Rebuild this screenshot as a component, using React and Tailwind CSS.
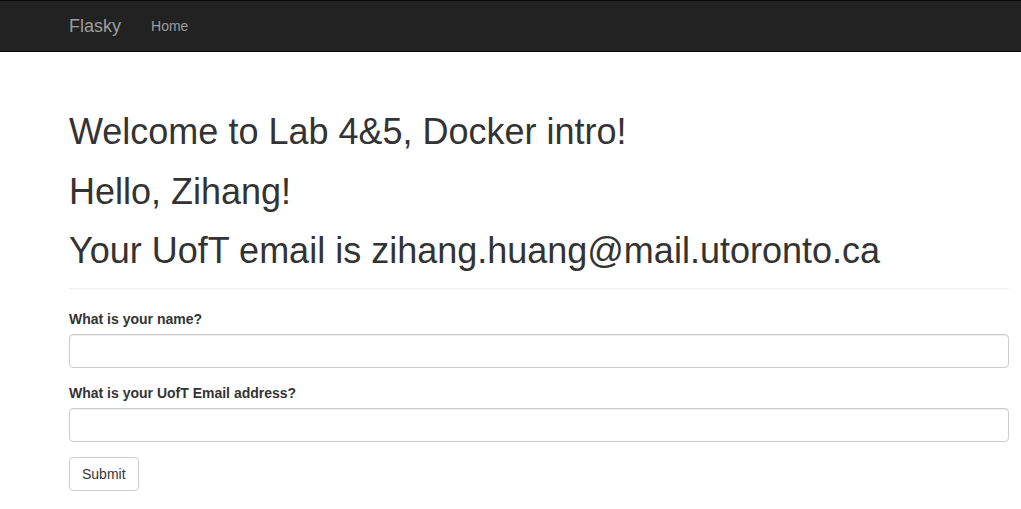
export default function App() {
  return (
    <div className="min-h-screen bg-white text-[14px] leading-[20px] text-[#333] font-['Liberation_Sans',Arial,sans-serif]">
      <nav className="h-[52px] border-y border-[#080808] bg-[#222]">
        <div className="ml-[54px] flex h-full w-[970px] items-center px-[15px]">
          <a className="text-[18px] leading-[20px] text-[#9d9d9d]" href="#">
            Flasky
          </a>
          <a className="ml-[30px] text-[14px] text-[#9d9d9d]" href="#">
            Home
          </a>
        </div>
      </nav>

      <div className="ml-[54px] w-[970px] px-[15px] pt-[20px]">
        <div className="mt-[40px] mb-[20px] border-b border-[#eee] pb-[7px]">
          <h1 className="text-[36px] leading-[1.1]">Welcome to Lab 4&amp;5, Docker intro!</h1>
          <h1 className="mt-[20px] text-[36px] leading-[1.1]">Hello, Zihang!</h1>
          <h1 className="mt-[20px] mb-[10px] text-[36px] leading-[1.1]">
            Your UofT email is zihang.huang@mail.utoronto.ca
          </h1>
        </div>

        <form onSubmit={(e) => e.preventDefault()}>
          <div className="mb-[15px]">
            <label className="mb-[5px] block font-bold">What is your name?</label>
            <input
              type="text"
              className="block h-[34px] w-full rounded-[4px] border border-[#ccc] px-[12px] py-[6px] shadow-[inset_0_1px_1px_rgba(0,0,0,0.075)] outline-none"
            />
          </div>
          <div className="mb-[15px]">
            <label className="mb-[5px] block font-bold">What is your UofT Email address?</label>
            <input
              type="text"
              className="block h-[34px] w-full rounded-[4px] border border-[#ccc] px-[12px] py-[6px] shadow-[inset_0_1px_1px_rgba(0,0,0,0.075)] outline-none"
            />
          </div>
          <button
            type="submit"
            className="h-[34px] rounded-[4px] border border-[#ccc] bg-white px-[12px] text-[14px] text-[#333]"
          >
            Submit
          </button>
        </form>
      </div>
    </div>
  );
}
